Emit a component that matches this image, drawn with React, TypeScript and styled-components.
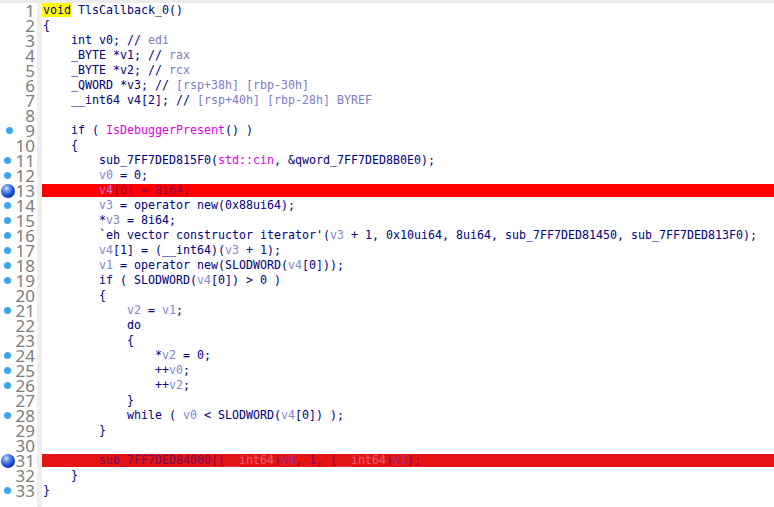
import React from "react";
import styled, { createGlobalStyle } from "styled-components";

const Global = createGlobalStyle`
  html, body { margin: 0; padding: 0; background: #ffffff; overflow: hidden; }
  #root { width: 774px; height: 507px; }
`;

type Kind = "n" | "v" | "c" | "m" | "kw" | "f";
type Tok = [Kind, string];
type Mark = "none" | "dot" | "ball";
type Hl = "none" | "red" | "red2";
interface Line { mark: Mark; hl: Hl; toks: Tok[] }

const I1 = "    ";
const I2 = "        ";
const I3 = "            ";
const I4 = "                ";

const L = (mark: Mark, toks: Tok[], hl: Hl = "none"): Line => ({ mark, hl, toks });

const lines: Line[] = [
  L("none", [["kw", "void"], ["n", " TlsCallback_0()"]]),
  L("none", [["n", "{"]]),
  L("none", [["n", I1 + "int v0; // "], ["c", "edi"]]),
  L("none", [["n", I1 + "_BYTE *v1; // "], ["c", "rax"]]),
  L("none", [["n", I1 + "_BYTE *v2; // "], ["c", "rcx"]]),
  L("none", [["n", I1 + "_QWORD *v3; // "], ["c", "[rsp+38h] [rbp-30h]"]]),
  L("none", [["n", I1 + "__int64 v4[2]; // "], ["c", "[rsp+40h] [rbp-28h] BYREF"]]),
  L("none", []),
  L("dot", [["n", I1 + "if ( "], ["m", "IsDebuggerPresent"], ["n", "() )"]]),
  L("none", [["n", I1 + "{"]]),
  L("dot", [["n", I2 + "sub_7FF7DED815F0("], ["m", "std::cin"], ["n", ", &qword_7FF7DED8B0E0);"]]),
  L("dot", [["n", I2], ["v", "v0"], ["n", " = 0;"]]),
  L("ball", [["n", I2], ["v", "v4"], ["n", "[0] = 8i64;"]], "red"),
  L("dot", [["n", I2], ["v", "v3"], ["n", " = operator new(0x88ui64);"]]),
  L("dot", [["n", I2 + "*"], ["v", "v3"], ["n", " = 8i64;"]]),
  L("dot", [["n", I2 + "`eh vector constructor iterator'("], ["v", "v3"], ["n", " + 1, 0x10ui64, 8ui64, sub_7FF7DED81450, sub_7FF7DED813F0);"]]),
  L("dot", [["n", I2], ["v", "v4"], ["n", "[1] = (__int64)("], ["v", "v3"], ["n", " + 1);"]]),
  L("dot", [["n", I2], ["v", "v1"], ["n", " = operator new(SLODWORD("], ["v", "v4"], ["n", "[0]));"]]),
  L("dot", [["n", I2 + "if ( SLODWORD("], ["v", "v4"], ["n", "[0]) > 0 )"]]),
  L("none", [["n", I2 + "{"]]),
  L("dot", [["n", I3], ["v", "v2"], ["n", " = "], ["v", "v1"], ["n", ";"]]),
  L("none", [["n", I3 + "do"]]),
  L("none", [["n", I3 + "{"]]),
  L("dot", [["n", I4 + "*"], ["v", "v2"], ["n", " = 0;"]]),
  L("dot", [["n", I4 + "++"], ["v", "v0"], ["n", ";"]]),
  L("dot", [["n", I4 + "++"], ["v", "v2"], ["n", ";"]]),
  L("none", [["n", I3 + "}"]]),
  L("dot", [["n", I3 + "while ( "], ["v", "v0"], ["n", " < SLODWORD("], ["v", "v4"], ["n", "[0]) );"]]),
  L("none", [["n", I2 + "}"]]),
  L("none", []),
  L("ball", [["n", I2 + "sub_7FF7DED84000(("], ["f", "__int64"], ["n", ")"], ["v", "v4"], ["n", ", 1, ("], ["f", "__int64"], ["n", ")"], ["v", "v1"], ["n", ");"]], "red2"),
  L("none", [["n", I1 + "}"]]),
  L("dot", [["n", "}"]]),
];

const palette: Record<Hl, Record<Kind, string>> = {
  none: { n: "#000080", kw: "#000080", v: "#8484cc", c: "#7c7cc4", m: "#e000e0", f: "#000080" },
  red: { n: "#8a0846", kw: "#8a0846", v: "#d27ad6", c: "#d27ad6", m: "#e000e0", f: "#e06878" },
  red2: { n: "#740a5c", kw: "#740a5c", v: "#9a2cb0", c: "#9a2cb0", m: "#e000e0", f: "#e0607a" },
};

const rowBg: Record<Hl, string> = {
  none: "transparent",
  red: "#ff0000",
  red2: "#e41414",
};

const Page = styled.div`
  display: flex;
  flex-direction: column;
  width: 774px;
  height: 507px;
  background: #ffffff;
  overflow: hidden;
`;

const TopBand = styled.div`
  height: 3px;
  flex: none;
  background: #ececec;
`;

const Editor = styled.div`
  display: flex;
  flex: 1;
  min-height: 0;
`;

const Gutter = styled.div`
  width: 37px;
  flex: none;
  display: flex;
  flex-direction: column;
`;

const GutterRow = styled.div`
  height: 15px;
  display: flex;
  align-items: center;
  justify-content: space-between;
  padding-right: 2px;
`;

const MarkerSlot = styled.div`
  width: 19px;
  height: 15px;
  display: flex;
  align-items: center;
  justify-content: center;
  position: relative;
  z-index: 1;
`;

const Dot = styled.span`
  width: 7px;
  height: 7px;
  border-radius: 50%;
  background: #3ba6ec;
`;

const Ball = styled.span`
  width: 14px;
  height: 14px;
  border-radius: 50%;
  margin-left: 1px;
  background: radial-gradient(circle at 38% 32%, #dfe9ff 0%, #6f9bf0 22%, #1d4fcc 55%, #0a2a8c 85%, #061c66 100%);
`;

const LineNo = styled.span`
  font-family: "Noto Sans", "Open Sans", sans-serif;
  font-size: 17px;
  line-height: 15px;
  color: #7d7d7d;
  white-space: nowrap;
`;

const Divider = styled.div`
  width: 5px;
  flex: none;
  background: #efefef;
`;

const Code = styled.div`
  flex: 1;
  display: flex;
  flex-direction: column;
  min-width: 0;
`;

const CodeRow = styled.div<{ $bg: string }>`
  height: 15px;
  padding-left: 1px;
  background: linear-gradient(to bottom, transparent 1px, ${(p) => p.$bg} 1px, ${(p) => p.$bg} 14px, transparent 14px);
  font-family: "DejaVu Sans Mono", "Liberation Mono", monospace;
  font-size: 11.63px;
  line-height: 15px;
  white-space: pre;
  overflow: hidden;
`;

const Tk = styled.span<{ $c: string }>`
  color: ${(p) => p.$c};
`;

const Kw = styled.span<{ $c: string }>`
  color: ${(p) => p.$c};
  background: #ffff00;
  display: inline-block;
  height: 14px;
  margin-left: -1px;
  padding-left: 1px;
`;

export default function App() {
  return (
    <Page>
      <Global />
      <TopBand />
      <Editor>
        <Gutter>
          {lines.map((ln, i) => (
            <GutterRow key={i}>
              <MarkerSlot>
                {ln.mark === "dot" && <Dot />}
                {ln.mark === "ball" && <Ball />}
              </MarkerSlot>
              <LineNo>{i + 1}</LineNo>
            </GutterRow>
          ))}
        </Gutter>
        <Divider />
        <Code>
          {lines.map((ln, i) => (
            <CodeRow key={i} $bg={rowBg[ln.hl]}>
              {ln.toks.map(([k, t], j) =>
                k === "kw" ? (
                  <Kw key={j} $c={palette[ln.hl][k]}>{t}</Kw>
                ) : (
                  <Tk key={j} $c={palette[ln.hl][k]}>{t}</Tk>
                )
              )}
            </CodeRow>
          ))}
        </Code>
      </Editor>
    </Page>
  );
}
